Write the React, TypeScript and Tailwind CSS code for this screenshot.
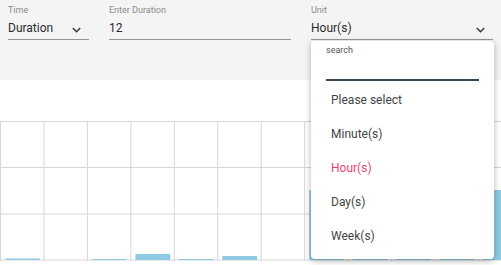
import React from "react";

const Chevron = ({ className = "" }: { className?: string }) => (
  <svg width="9" height="6" viewBox="0 0 9 6" className={className}>
    <path d="M0.8 1 L4.5 4.7 L8.2 1" fill="none" stroke="#333" strokeWidth="1.4" />
  </svg>
);

const Chart = () => {
  const step = 43.45;
  const vlines = Array.from({ length: 12 }, (_, i) => i * step + 0.5);
  const bars = [
    { c: 0, h: 1.5 },
    { c: 2, h: 1 },
    { c: 3, h: 6 },
    { c: 4, h: 1 },
    { c: 5, h: 4 },
    { c: 7, h: 70 },
    { c: 8, h: 70 },
    { c: 9, h: 70 },
    { c: 10, h: 70 },
    { c: 11, h: 70 },
  ];
  const base = 140;
  return (
    <svg width="501" height="145" viewBox="0 0 501 145" className="block">
      {[1.5, 47.5, 94, 140].map((y) => (
        <line key={y} x1="0" x2="501" y1={y} y2={y} stroke="#d6d6d6" strokeWidth="1" />
      ))}
      {vlines.map((x) => (
        <line key={x} x1={x} x2={x} y1="1" y2={base + 1} stroke="#d6d6d6" strokeWidth="1" />
      ))}
      {bars.map((b) => {
        const x = b.c * step + 5;
        return (
          <rect key={b.c} x={x} y={base - b.h} width="35" height={b.h} rx="1" fill="#8ecae4" />
        );
      })}
    </svg>
  );
};

export default function App() {
  const items = ["Please select", "Minute(s)", "Hour(s)", "Day(s)", "Week(s)"];
  return (
    <div
      className="relative w-[501px] h-[265px] overflow-hidden bg-white"
      style={{ fontFamily: "Roboto, 'Noto Sans', sans-serif" }}
    >
      <div className="h-[80px] bg-[#f4f4f4] flex gap-[20px] pl-[8px] pr-[8px] pt-[4px]">
        <div className="w-[81px]">
          <div className="text-[9px] leading-[12px] text-[#8a8a8a]">Time</div>
          <div className="flex items-center justify-between h-[24px] border-b border-[#959595]">
            <span className="text-[12px] text-[#2b2b2b] leading-[18px] pt-[1px]">Duration</span>
            <Chevron className="mr-[8px] mt-[4px]" />
          </div>
        </div>
        <div className="w-[182px]">
          <div className="text-[9px] leading-[12px] text-[#8a8a8a]">Enter Duration</div>
          <div className="flex items-center h-[24px] border-b border-[#959595]">
            <span className="text-[12px] text-[#2b2b2b] leading-[18px] pt-[1px]">12</span>
          </div>
        </div>
        <div className="w-[182px]">
          <div className="text-[9px] leading-[12px] text-[#8a8a8a]">Unit</div>
          <div className="flex items-center justify-between h-[24px] border-b border-[#959595]">
            <span className="text-[12px] text-[#2b2b2b] leading-[18px] pt-[1px]">Hour(s)</span>
            <Chevron className="mr-[8px] mt-[4px]" />
          </div>
        </div>
      </div>
      <div className="h-[40px]" />
      <Chart />

      <div className="absolute left-[311px] top-[41px] w-[183px] h-[218px] bg-white rounded-[4px] shadow-[0_2px_6px_rgba(0,0,0,0.3)]">
        <div className="pl-[15px] pr-[15px] pt-[3px]">
          <div className="text-[9px] leading-[12px] text-[#555]">search</div>
          <div className="h-[25px] border-b-2 border-[#37474f]" />
        </div>
        <div className="pt-[2px]">
          {items.map((it) => (
            <div
              key={it}
              className={`h-[34px] flex items-center pl-[20px] text-[12px] ${
                it === "Hour(s)" ? "text-[#ec407a]" : "text-[#444]"
              }`}
            >
              {it}
            </div>
          ))}
        </div>
      </div>
    </div>
  );
}
